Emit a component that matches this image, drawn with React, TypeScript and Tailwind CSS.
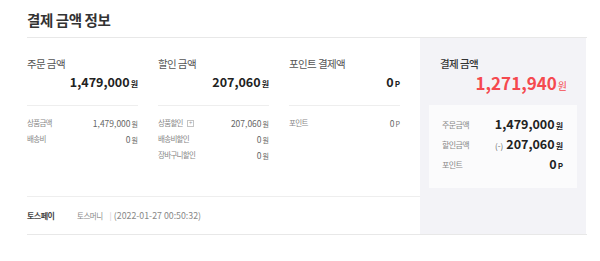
import React from 'react';

type Row = { label: string; value: string; unit: string; plus?: boolean };

const columns: { title: string; amount: string; unit: string; rows: Row[] }[] = [
	{
		title: '주문 금액',
		amount: '1,479,000',
		unit: '원',
		rows: [
			{ label: '상품금액', value: '1,479,000', unit: '원' },
			{ label: '배송비', value: '0', unit: '원' },
		],
	},
	{
		title: '할인 금액',
		amount: '207,060',
		unit: '원',
		rows: [
			{ label: '상품할인', value: '207,060', unit: '원', plus: true },
			{ label: '배송비할인', value: '0', unit: '원' },
			{ label: '장바구니할인', value: '0', unit: '원' },
		],
	},
	{
		title: '포인트 결제액',
		amount: '0',
		unit: 'P',
		rows: [{ label: '포인트', value: '0', unit: 'P' }],
	},
];

const summary = [
	{ label: '주문금액', prefix: '', value: '1,479,000', unit: '원' },
	{ label: '할인금액', prefix: '(-)', value: '207,060', unit: '원' },
	{ label: '포인트', prefix: '', value: '0', unit: 'P' },
];

const App = () => {
	return (
		<div
			className="w-[600px] h-[261px] bg-white pl-[27px] pt-[10px]"
			style={{ fontFamily: '"Noto Sans CJK KR", "Noto Sans", sans-serif' }}
		>
			<div className="w-[560px]">
				<h2 className="h-[28px] text-[14.5px] leading-[20px] font-bold text-[#333] tracking-[-0.4px] border-b border-[#e8e8e8]">
					결제 금액 정보
				</h2>
				<div className="flex border-b border-[#e8e8e8]">
					<div className="w-[393px] flex flex-col">
						<div className="h-[158px] flex gap-[20px] pt-[19px]">
							{columns.map((col) => (
								<div key={col.title} className="w-[111px] flex flex-col">
									<div className="h-[49px] border-b border-[#eeeeee]">
										<p className="h-[14px] text-[10.5px] leading-[14px] text-[#555] tracking-[-0.6px]">
											{col.title}
										</p>
										<p className="mt-[2px] h-[18px] flex justify-end items-baseline text-[#222]">
											<span className="text-[12.5px] leading-[18px] font-bold">{col.amount}</span>
											<span className="text-[8px] leading-[18px] font-bold ml-[1px]">{col.unit}</span>
										</p>
									</div>
									<div className="pt-[9px] flex flex-col">
										{col.rows.map((r) => (
											<div key={r.label} className="h-[16px] flex items-center justify-between">
												<span className="flex items-center text-[7.5px] leading-[16px] text-[#888] tracking-[-0.7px]">
													{r.label}
													{r.plus && (
														<span className="ml-[4px] w-[7px] h-[7px] border border-[#c4c4c4] text-[#999] flex items-center justify-center text-[6px] leading-none">
															+
														</span>
													)}
												</span>
												<span className="flex items-baseline text-[#666]">
													<span className="text-[8.5px] leading-[16px]">{r.value}</span>
													<span className="text-[7px] leading-[16px] ml-[1px]">{r.unit}</span>
												</span>
											</div>
										))}
									</div>
								</div>
							))}
						</div>
						<div className="h-[38px] border-t border-[#eeeeee] flex items-center text-[#888]">
							<span className="w-[50px] text-[8px] leading-[14px] font-bold text-[#444] tracking-[-0.5px]">
								토스페이
							</span>
							<span className="text-[7.5px] leading-[14px] tracking-[-0.5px]">토스머니</span>
							<span className="ml-[7px] mr-[2px] text-[8px] leading-[14px] text-[#ccc]">|</span>
							<span className="text-[8.8px] leading-[14px]">(2022-01-27 00:50:32)</span>
						</div>
					</div>
					<div className="w-[166px] bg-[#f3f3f7] px-[9px] pt-[19px]">
						<p className="pl-[11px] h-[14px] text-[10.5px] leading-[14px] font-medium text-[#333] tracking-[-0.6px]">
							결제 금액
						</p>
						<p className="mt-[1px] h-[22px] flex justify-end items-baseline pr-[10px] text-[#f5494f]">
							<span className="text-[17px] leading-[22px] font-bold">1,271,940</span>
							<span className="text-[10px] leading-[22px] ml-[1px]">원</span>
						</p>
						<div className="mt-[11px] h-[83px] bg-[#fbfbfc] pl-[13px] pr-[14px] pt-[10px] flex flex-col">
							{summary.map((s) => (
								<div key={s.label} className="h-[20px] flex items-center justify-between">
									<span className="text-[8px] leading-[20px] text-[#888] tracking-[-0.6px]">
										{s.label}
									</span>
									<span className="flex items-baseline text-[#222]">
										{s.prefix && (
											<span className="text-[8px] leading-[20px] text-[#666] mr-[3px]">{s.prefix}</span>
										)}
										<span className="text-[12.5px] font-bold leading-[20px]">{s.value}</span>
										<span className="text-[8px] leading-[20px] font-bold ml-[1px]">{s.unit}</span>
									</span>
								</div>
							))}
						</div>
					</div>
				</div>
			</div>
		</div>
	);
};

export default App;
